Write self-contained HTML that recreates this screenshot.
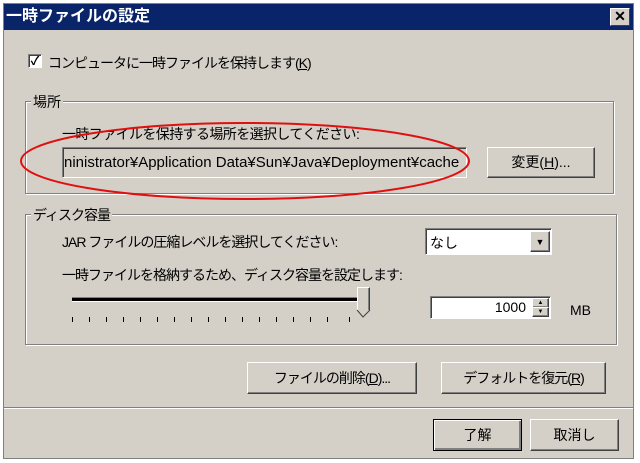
<!DOCTYPE html>
<html><head><meta charset="utf-8"><style>
body{margin:0;width:640px;height:463px;background:#fff;position:relative;overflow:hidden;font-family:"Liberation Sans","Noto Sans CJK JP",sans-serif;font-size:13px;color:#000}
.a{position:absolute}
.dlg{left:3px;top:3px;width:631px;height:456px;background:#d4d0c8;border:1px solid #808080;box-sizing:border-box}
.title{left:4px;top:4px;width:629px;height:26px;background:#0a246a;color:#fff;font-weight:bold;font-size:16px;line-height:26px;padding-left:2px;box-sizing:border-box}
.x{left:610px;top:8px;width:18px;height:16px;background:#d4d0c8;border:1px solid;border-color:#fff #404040 #404040 #fff;font-size:14px;line-height:15px;text-align:center;font-weight:bold;color:#000}
.grp{border:1px solid #808080;box-shadow:1px 1px 0 #fff, inset 1px 1px 0 #fff}
.lbl{background:#d4d0c8;padding:0 2px}
.btn{background:#d4d0c8;border:1px solid;border-color:#fff #404040 #404040 #fff;box-shadow:inset -1px -1px 0 #808080;box-sizing:border-box;text-align:center}
.sunk{background:#fff;border:1px solid;border-color:#808080 #fff #fff #808080;box-shadow:inset 1px 1px 0 #404040;box-sizing:border-box}
.t{white-space:nowrap}
.c{letter-spacing:-1px}
</style></head><body>
<div class="a dlg"></div>
<div class="a title">一時ファイルの設定</div>
<div class="a x">✕</div>
<div class="a sunk" style="left:28px;top:54px;width:14px;height:14px;font-size:12px;line-height:12px;text-align:center;font-weight:bold">✓</div>
<div class="a t c" style="left:48px;top:53px;font-size:14px">コンピュータに一時ファイルを保持します(<u>K</u>)</div>
<div class="a grp" style="left:25px;top:101px;width:587px;height:91px"></div>
<div class="a t lbl" style="left:31px;top:92px;font-size:14px">場所</div>
<div class="a t" style="left:62px;top:124px;font-size:14px;letter-spacing:-0.6px">一時ファイルを保持する場所を選択してください:</div>
<div class="a sunk" style="left:62px;top:147px;width:405px;height:31px;background:#d4d0c8;overflow:hidden"><span class="a t" style="left:1px;top:6px;font-size:15px">ninistrator¥Application Data¥Sun¥Java¥Deployment¥cache</span></div>
<div class="a btn" style="left:487px;top:147px;width:108px;height:31px;line-height:29px;font-size:14px">変更(<u>H</u>)...</div>
<div class="a grp" style="left:25px;top:214px;width:590px;height:129px"></div>
<div class="a t lbl c" style="left:31px;top:205px;font-size:14px">ディスク容量</div>
<div class="a t c" style="left:62px;top:232px;font-size:14px">JAR ファイルの圧縮レベルを選択してください:</div>
<div class="a sunk" style="left:425px;top:228px;width:127px;height:27px"><span class="a" style="left:4px;top:4px;font-size:14px">なし</span><div class="a btn" style="right:1px;top:2px;width:20px;height:21px;font-size:9px;line-height:20px">▼</div></div>
<div class="a t c" style="left:62px;top:265px;font-size:14px">一時ファイルを格納するため、ディスク容量を設定します:</div>
<div class="a" style="left:72px;top:297px;width:288px;height:3px;border-top:1px solid #808080;border-bottom:1px solid #fff;background:#000"></div>
<div class="a btn" style="left:357px;top:287px;width:13px;height:24px;border-bottom:none"></div>
<svg class="a" style="left:0;top:0" width="640" height="463"><g stroke="#000" stroke-width="1">
<line x1="72.5" y1="317" x2="72.5" y2="322"/><line x1="89.5" y1="317" x2="89.5" y2="322"/><line x1="106.5" y1="317" x2="106.5" y2="322"/><line x1="123.5" y1="317" x2="123.5" y2="322"/><line x1="140.5" y1="317" x2="140.5" y2="322"/><line x1="157.5" y1="317" x2="157.5" y2="322"/><line x1="174.5" y1="317" x2="174.5" y2="322"/><line x1="191.5" y1="317" x2="191.5" y2="322"/><line x1="208.5" y1="317" x2="208.5" y2="322"/><line x1="225.5" y1="317" x2="225.5" y2="322"/><line x1="242.5" y1="317" x2="242.5" y2="322"/><line x1="259.5" y1="317" x2="259.5" y2="322"/><line x1="276.5" y1="317" x2="276.5" y2="322"/><line x1="293.5" y1="317" x2="293.5" y2="322"/><line x1="310.5" y1="317" x2="310.5" y2="322"/><line x1="327.5" y1="317" x2="327.5" y2="322"/><line x1="349.5" y1="317" x2="349.5" y2="322"/></g>
<path d="M357 310 L363 317 L370 310" fill="#d4d0c8" stroke="#404040"/>
<ellipse cx="245" cy="161" rx="224" ry="38" fill="none" stroke="#e01010" stroke-width="2"/>
</svg>
<div class="a sunk" style="left:430px;top:296px;width:121px;height:23px"><span class="a" style="right:24px;top:2px;font-size:14px">1000</span><div class="a btn" style="right:1px;top:1px;width:17px;height:10px;font-size:6px;line-height:8px">▲</div><div class="a btn" style="right:1px;top:10px;width:17px;height:10px;font-size:6px;line-height:8px">▼</div></div>
<div class="a t" style="left:570px;top:302px;font-size:14px">MB</div>
<div class="a btn c" style="left:247px;top:362px;width:170px;height:32px;line-height:30px;font-size:14px">ファイルの削除(<u>D</u>)...</div>
<div class="a btn c" style="left:441px;top:362px;width:165px;height:32px;line-height:30px;font-size:14px">デフォルトを復元(<u>R</u>)</div>
<div class="a" style="left:4px;top:407px;width:629px;height:1px;background:#808080;border-bottom:1px solid #fff"></div>
<div class="a btn" style="left:433px;top:419px;width:89px;height:32px;line-height:30px;font-size:14px;border:1px solid #000;box-shadow:inset 1px 1px 0 #fff,inset -2px -2px 0 #808080">了解</div>
<div class="a btn" style="left:530px;top:419px;width:89px;height:32px;line-height:30px;font-size:14px">取消し</div>
</body></html>
